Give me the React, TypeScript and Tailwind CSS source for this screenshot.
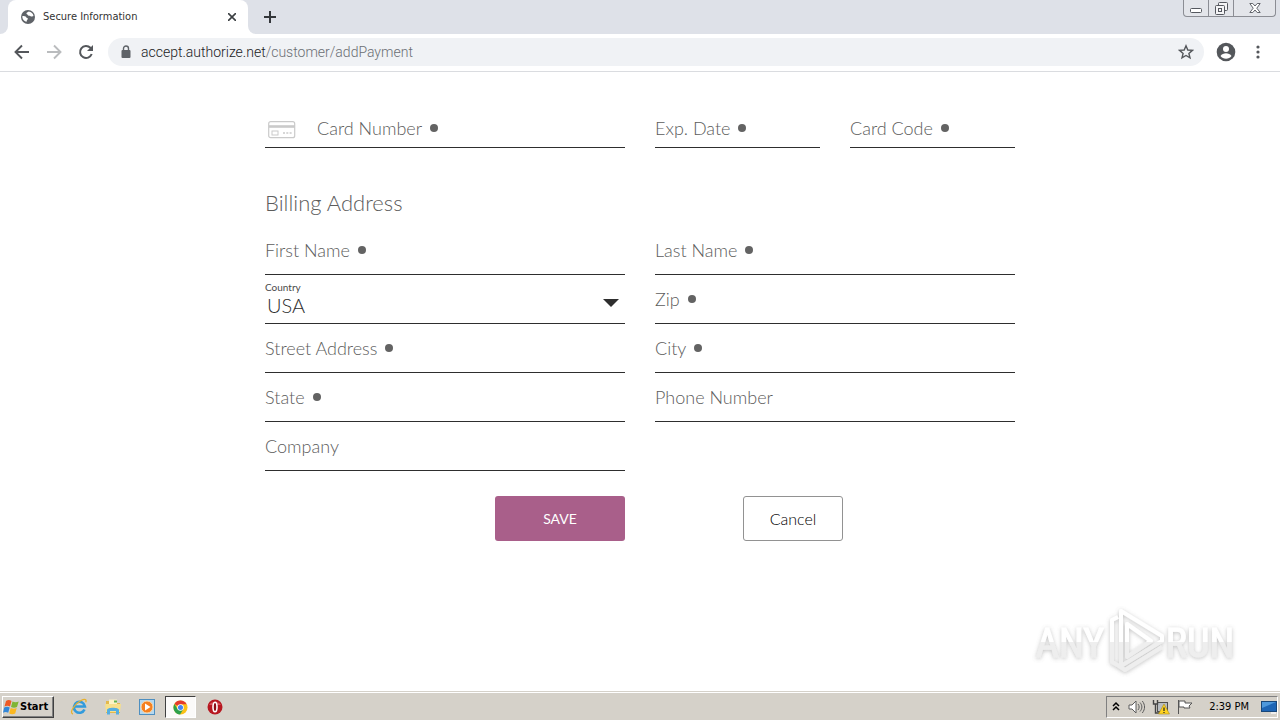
import React from 'react';

interface FieldProps {
  id: string;
  label: string;
  required?: boolean;
  compact?: boolean;
  icon?: React.ReactNode;
}

const Dot: React.FC = () => <span className="w-2 h-2 rounded-full bg-[#636363] ml-2 shrink-0" aria-hidden="true"></span>;

const Field: React.FC<FieldProps> = ({ id, label, required, compact, icon }) => (
  <div className={`flex items-start border-b border-[#2e2e2e] ${compact ? 'h-[41px]' : 'h-[49px]'}`}>
    {icon}
    <label htmlFor={id} className={`flex items-center text-lg leading-6 text-[#5c5c5c] whitespace-nowrap ${compact ? 'h-[41px]' : 'h-12'}`}>
      {label}
      {required && <Dot />}
    </label>
    <input id={id} type="text" className="flex-1 min-w-0 h-full ml-2 text-lg text-[#2e2e2e] bg-transparent outline-none" />
  </div>
);

const CardIcon: React.FC = () => (
  <svg className="w-7 h-[18px] ml-[3px] mr-[21px] mt-[14px] shrink-0" viewBox="0 0 28 18" fill="none" stroke="#cacaca">
    <rect x="0.7" y="0.7" width="26" height="16" rx="2" strokeWidth="1.2" />
    <path d="M1 5.5h26" strokeWidth="2.6" />
    <rect x="4" y="10" width="6" height="4" />
    <path d="M15 12h9" strokeWidth="1.4" strokeDasharray="2 1.3" />
  </svg>
);

const BrowserChrome: React.FC = () => (
  <header className="font-['Roboto',sans-serif]">
    {/* Tab strip */}
    <div className="flex h-[34px] bg-[#dee1e8]">
      <div className="w-2 bg-white"><div className="h-full bg-[#dee1e8] rounded-br-lg"></div></div>
      <div className="flex items-center w-60 bg-white rounded-t-lg pl-3 pr-2">
        <svg className="w-4 h-4 mr-[7px]" viewBox="0 0 16 16">
          <circle cx="8" cy="8" r="7" fill="#5f6368" />
          <path d="M2.400 7c1.800 0 3.300.2 3.800 1.200.4.800 1.600.6 1.700 1.600.1.900-1.200 1.100-1.300 2.900C4 12.200 2 9.800 2.400 7zM8.600 2.600c-.4 1-2 .7-2.200 1.700-.1 1 1.200.8 1.400 1.700.2.800 1.100.9 1.800.7.700-.3 1 .8 1.900.8.900.1 1.500-.1 2-.4C13.200 4.700 11.300 2.700 8.600 2.600z" fill="#fff" />
        </svg>
        <span className="flex-1 text-[11px] font-['DejaVu_Sans_Condensed','DejaVu_Sans',sans-serif] text-[#333]">Secure Information</span>
        <button aria-label="Close tab" className="w-4 h-4 flex items-center justify-center">
          <svg className="w-2 h-2" viewBox="0 0 8 8" stroke="#3c4043" strokeWidth="1.6"><path d="M0 0l8 8M8 0L0 8" /></svg>
        </button>
      </div>
      <div className="w-2 bg-white"><div className="h-full bg-[#dee1e8] rounded-bl-lg"></div></div>
      <button aria-label="New tab" className="w-7 flex items-center justify-center">
        <svg className="w-3 h-3" viewBox="0 0 12 12" stroke="#34373b" strokeWidth="2"><path d="M6 0v12M0 6h12" /></svg>
      </button>
      <div className="ml-auto mr-1 flex h-[17px] border border-t-0 border-[#8b8d94] rounded-b-[4px] bg-[#e3e5ea]">
        <button aria-label="Minimize" className="w-[25px] flex items-center justify-center border-r border-[#8b8d94]">
          <svg className="w-3 h-4" viewBox="0 0 12 16" fill="#fff" stroke="#55585f"><rect x="0.5" y="8.5" width="11" height="4" rx="1" /></svg>
        </button>
        <button aria-label="Restore" className="w-[25px] flex items-center justify-center border-r border-[#8b8d94]">
          <svg className="w-[13px] h-4" viewBox="0 0 13 16" fill="#f4f4f6" stroke="#55585f">
            <rect x="3.5" y="2.5" width="9" height="8" rx="1" />
            <rect x="0.5" y="5.5" width="9" height="9" rx="1" />
            <rect x="3.5" y="8.5" width="3" height="3" />
          </svg>
        </button>
        <button aria-label="Close" className="w-[41px] flex items-center justify-center">
          <svg className="w-3 h-4" viewBox="0 0 12 16" fill="#fff" stroke="#62656c"><path d="M.8 3.5h3L6 6l2.200-2.500h3L7.800 8.200l3.400 4.300h-3L6 10l-2.200 2.500h-3l3.400-4.300z" /></svg>
        </button>
      </div>
    </div>

    {/* Toolbar */}
    <div className="flex items-center h-[38px] pb-px pl-3 pr-3 bg-white border-b border-[#dadce0]">
      <button aria-label="Back" className="w-5 h-5">
        <svg className="w-5 h-5" viewBox="0 0 20 20" fill="none" stroke="#54575b" strokeWidth="1.900"><path d="M17 10H4M10 3.500L3.500 10l6.500 6.500" /></svg>
      </button>
      <button aria-label="Forward" className="w-5 h-5 ml-3">
        <svg className="w-5 h-5" viewBox="0 0 20 20" fill="none" stroke="#babcbe" strokeWidth="1.900"><path d="M3 10h13M10 3.500l6.500 6.500-6.500 6.500" /></svg>
      </button>
      <button aria-label="Reload" className="w-5 h-5 ml-3">
        <svg className="w-5 h-5" viewBox="0 0 20 20" fill="none" stroke="#54575b" strokeWidth="2"><path d="M15.700 12a6 6 0 1 1-1.300-6.200L16 7.500" /><path d="M17 3v6h-6z" fill="#54575b" stroke="none" /></svg>
      </button>
      <div className="flex flex-1 items-center h-7 ml-3 pl-3 pr-2 rounded-full bg-[#f0f2f5]">
        <svg className="w-3 h-[14px] mr-[9px]" viewBox="0 0 12 14"><rect x="1.500" y="5" width="9" height="8" rx="1" fill="#5f6368" /><path d="M3.500 5.500V3.500a2.500 2.500 0 0 1 5 0v2" fill="none" stroke="#5f6368" strokeWidth="1.400" /></svg>
        <span className="flex-1 text-sm text-[#6b6f74] font-light">
          <span className="text-[#202124]">accept.authorize.net</span>/customer/addPayment
        </span>
        <button aria-label="Bookmark this page" className="w-5 h-5 flex items-center justify-center">
          <svg className="w-4 h-4" viewBox="0 0 16 16" fill="none" stroke="#54575b" strokeWidth="1.400"><path d="M8 1.800l1.800 4.200 4.600.4-3.500 3 1.100 4.500L8 11.500l-4 2.400 1.100-4.500-3.500-3 4.600-.4z" /></svg>
        </button>
      </div>
      <button aria-label="Profile" className="w-5 h-5 ml-3">
        <svg className="w-5 h-5" viewBox="0 0 20 20" fill="#fff"><circle cx="10" cy="10" r="9.300" fill="#54575b" /><circle cx="10" cy="7" r="3" /><path d="M4.500 14c1-2 3.500-2.800 5.500-2.800s4.500.8 5.500 2.800c-1.300 1.800-3.300 2.800-5.500 2.800S5.800 15.800 4.500 14z" /></svg>
      </button>
      <button aria-label="Menu" className="w-5 h-5 ml-3">
        <svg className="w-5 h-5" viewBox="0 0 20 20" fill="#54575b"><circle cx="10" cy="5" r="1.600" /><circle cx="10" cy="10" r="1.600" /><circle cx="10" cy="15" r="1.600" /></svg>
      </button>
    </div>
  </header>
);

const PaymentForm: React.FC = () => (
  <form className="w-full max-w-[750px] mx-auto pt-[35px] font-['Lato',sans-serif] font-light" onSubmit={(e) => e.preventDefault()}>
    <div className="grid grid-cols-2 gap-x-[30px]">
      <Field id="card-number" label="Card Number" required compact icon={<CardIcon />} />
      <div className="grid grid-cols-2 gap-x-[30px]">
        <Field id="exp-date" label="Exp. Date" required compact />
        <Field id="card-code" label="Card Code" required compact />
      </div>
    </div>

    <h2 className="mt-[41px] mb-[9px] text-[22px] leading-7 text-[#5c5c5c]">Billing Address</h2>

    <div className="grid grid-cols-2 gap-x-[30px]">
      <Field id="first-name" label="First Name" required />
      <Field id="last-name" label="Last Name" required />
      <div className="relative flex flex-col h-[49px] border-b border-[#2e2e2e] pt-[6px]">
        <label htmlFor="country" className="text-[10px] leading-3 text-[#4a4a4a] font-normal">Country</label>
        <select id="country" className="w-full h-6 pl-[2px] text-xl leading-6 text-[#2e2e2e] appearance-none bg-transparent outline-none">
          <option>USA</option>
        </select>
        <svg className="absolute right-[6px] top-6 w-4 h-2 pointer-events-none" viewBox="0 0 16 8"><path d="M0 0h16L8 8z" fill="#2e2e2e" /></svg>
      </div>
      <Field id="zip" label="Zip" required />
      <Field id="street" label="Street Address" required />
      <Field id="city" label="City" required />
      <Field id="state" label="State" required />
      <Field id="phone" label="Phone Number" />
      <Field id="company" label="Company" />
    </div>

    <div className="grid grid-cols-2 gap-x-[30px] mt-[25px]">
      <button type="submit" className="justify-self-end w-[130px] h-[45px] rounded-[3px] bg-[#a95f8a] text-white text-sm font-normal">SAVE</button>
      <button type="button" className="ml-[88px] w-[100px] h-[45px] rounded-[3px] border border-[#929292] text-black text-base font-light">Cancel</button>
    </div>
  </form>
);

const Watermark: React.FC = () => (
  <svg className="absolute right-9 bottom-3 w-[220px] h-[80px] pointer-events-none" viewBox="0 0 220 80" aria-label="ANY RUN">
    <defs>
      <filter id="soft" x="-10%" y="-20%" width="120%" height="140%">
        <feDropShadow dx="0" dy="1" stdDeviation="2" floodColor="#777" floodOpacity="0.45" />
      </filter>
      <linearGradient id="fade" x1="0" y1="0" x2="0" y2="80" gradientUnits="userSpaceOnUse">
        <stop offset="0.52" stopColor="#fff" />
        <stop offset="0.53" stopColor="#eee" />
      </linearGradient>
    </defs>
    <g filter="url(#soft)" fill="url(#fade)" className="font-['Roboto_Condensed','Liberation_Sans_Narrow',sans-serif] text-[40px]">
      <text x="46" y="57" textAnchor="middle" stroke="url(#fade)" strokeWidth="1">ANY</text>
      <text x="176" y="57" textAnchor="middle" stroke="url(#fade)" strokeWidth="1">RUN</text>
      <g fill="none" stroke="url(#fade)" strokeWidth="4" strokeLinejoin="round">
        <path d="M97 11l41 25v5L97 66zM103 24l24 17-24 16z" />
        <path d="M94 17l-6 3v42l7 4 6 4 37-23" />
      </g>
    </g>
  </svg>
);

const taskButton = 'w-[31px] h-[22px] flex items-center justify-center';

const Taskbar: React.FC = () => (
  <footer className="flex items-center h-7 pt-px pl-0.5 pr-0.5 bg-[#d5d1c9] border-t border-white shadow-[0_-1px_0_#d5d1c9] font-['DejaVu_Sans_Condensed','DejaVu_Sans',sans-serif] relative">
    <button className="flex items-center w-[52px] h-[22px] border border-t-white border-l-white border-r-[#404040] border-b-[#404040] shadow-[inset_-1px_-1px_0_#808080] text-[11px] font-bold text-black">
      <svg className="w-[17px] h-4 shrink-0" viewBox="0 0 17 16">
        <path d="M3 2c2-1.400 4-1 5.500 0L7 7.500C5.400 6.500 3.500 6.400 1.500 7.500z" fill="#ef5a25" />
        <path d="M9.500 2.600c2 1 4 1 6.200 0L14 8c-2 1-4 1-6 0z" fill="#80b534" />
        <path d="M1.200 8.600c2-1.200 4-1 5.500 0l-1.500 5.200c-1.600-1-3.500-1-5.200 0z" fill="#3387d8" />
        <path d="M7.700 9c2 1 4 1 6 0l-1.500 5.400c-2 1-4 1-6 0z" fill="#fbb820" />
      </svg>
      Start
    </button>

    <div className="flex items-center gap-[3px] ml-[9px]">
      <button aria-label="Internet Explorer" className={taskButton}>
        <svg className="w-[18px] h-[18px]" viewBox="0 0 18 18" fill="none"><path d="M14.500 11.500a5.500 5.500 0 1 1 .4-3H5" stroke="#329bdc" strokeWidth="2.600" /><path d="M3 16C-1.500 15 5 5.500 11 2.500c4-2 6-1 4.700 1.800" stroke="#e8b12c" strokeWidth="1.300" /></svg>
      </button>
      <button aria-label="File Explorer" className={taskButton}>
        <svg className="w-[18px] h-[18px]" viewBox="0 0 18 18"><path d="M2 3h5l1 2h8v10H2z" fill="#e3b94c" /><path d="M5 1.500h8V9H5z" fill="#fbf3c4" /><path d="M1 6h16l-1 8H2z" fill="#f6e08c" /><path d="M3 16.500V12c0-3 12-3 12 0v4.500h-3V13H6v3.500z" fill="#55aee0" /><path d="M10 2.500h3v2h-3z" fill="#5fb152" /></svg>
      </button>
      <button aria-label="Media Player" className={taskButton}>
        <svg className="w-4 h-4" viewBox="0 0 16 16"><rect x="0.500" y="0.500" width="15" height="15" fill="#b5d8ef" stroke="#4e8fc0" /><circle cx="8" cy="8" r="6" fill="#f5801f" stroke="#ffd7a3" /><path d="M6 4.500L11.500 8 6 11.500z" fill="#fff" /></svg>
      </button>
      <button aria-label="Chrome" className="w-[31px] h-[22px] flex items-center justify-center bg-[#fbfaf9] border border-t-[#404040] border-l-[#404040] border-r-white border-b-white">
        <svg className="w-[15px] h-[15px]" viewBox="0 0 16 16"><circle cx="8" cy="8" r="7.500" fill="#fbc116" /><path d="M8 8L1.500 4.200A7.500 7.500 0 0 1 14.500 4.400L8 4.500z" fill="#e33b2e" /><path d="M1.500 4.200a7.500 7.500 0 0 0 6 11.300L11 9.800 5 9.800z" fill="#2da14c" /><circle cx="8" cy="8" r="3.500" fill="#fff" /><circle cx="8" cy="8" r="2.700" fill="#4285f4" /></svg>
      </button>
      <button aria-label="Opera" className={taskButton}>
        <svg className="w-4 h-4" viewBox="0 0 16 16"><circle cx="8" cy="8" r="7.500" fill="#b71720" /><path d="M2 6a6.500 5 0 0 1 12 0z" fill="#d8535a" /><ellipse cx="8" cy="8" rx="2" ry="4.800" fill="#8d0c14" stroke="#fff" strokeWidth="1.600" /></svg>
      </button>
    </div>

    <div className="ml-auto flex items-center h-[22px] pl-[3px] border border-t-[#808080] border-l-[#808080] border-r-white border-b-white">
      <button aria-label="Show hidden icons" className="w-3 h-4"><svg className="w-2 h-4 m-auto" viewBox="0 0 8 16" fill="none" stroke="#000" strokeWidth="1.500"><path d="M1 7l3-3 3 3M1 11l3-3 3 3" /></svg></button>
      <svg className="w-[18px] h-4 ml-[6px]" viewBox="0 0 18 16" fill="#fff" stroke="#5c5c5c"><path d="M1 6h3l4-4v12l-4-4H1z" /><path d="M10 5c1.500 2 1.500 4 0 6M12 3.500c2.500 3 2.500 6 0 9M14.300 2c3 4 3 8 0 12" fill="none" /></svg>
      <svg className="w-[18px] h-4 ml-[6px]" viewBox="0 0 18 16"><rect x="5.500" y="3.500" width="10" height="9" fill="#b8bdc2" stroke="#4e4e4e" /><path d="M1.500 1v4h4V1M3.500 5v9h5" fill="none" stroke="#444" strokeWidth="1.400" /><path d="M12 5l5.500 10h-11z" fill="#ffd320" stroke="#a88b1b" strokeWidth=".6" /><path d="M12 8.500V12M12 13v1" stroke="#222" strokeWidth="1.200" /></svg>
      <svg className="w-4 h-4 ml-[7px]" viewBox="0 0 16 16" fill="#fff" stroke="#555"><path d="M1.500 1v14M2 2h6v2h7l-3 3 1 2H7V8H2z" /></svg>
      <span className="ml-4 text-[11px] leading-4 text-black whitespace-nowrap">2:39 PM</span>
      <svg className="w-4 h-4 ml-3" viewBox="0 0 16 16"><rect x="0.500" y="2.500" width="15" height="10" fill="#1d65b5" stroke="#184779" /><path d="M1 3h14L1 9z" fill="#4d98dc" /><path d="M10 13h5v2h-5z" fill="#eee" /></svg>
    </div>
  </footer>
);

const App: React.FC = () => {
  return (
    <div className="flex flex-col min-h-screen bg-white">
      <BrowserChrome />
      <main className="relative flex-1">
        <PaymentForm />
        <Watermark />
      </main>
      <Taskbar />
    </div>
  );
};

export default App;
